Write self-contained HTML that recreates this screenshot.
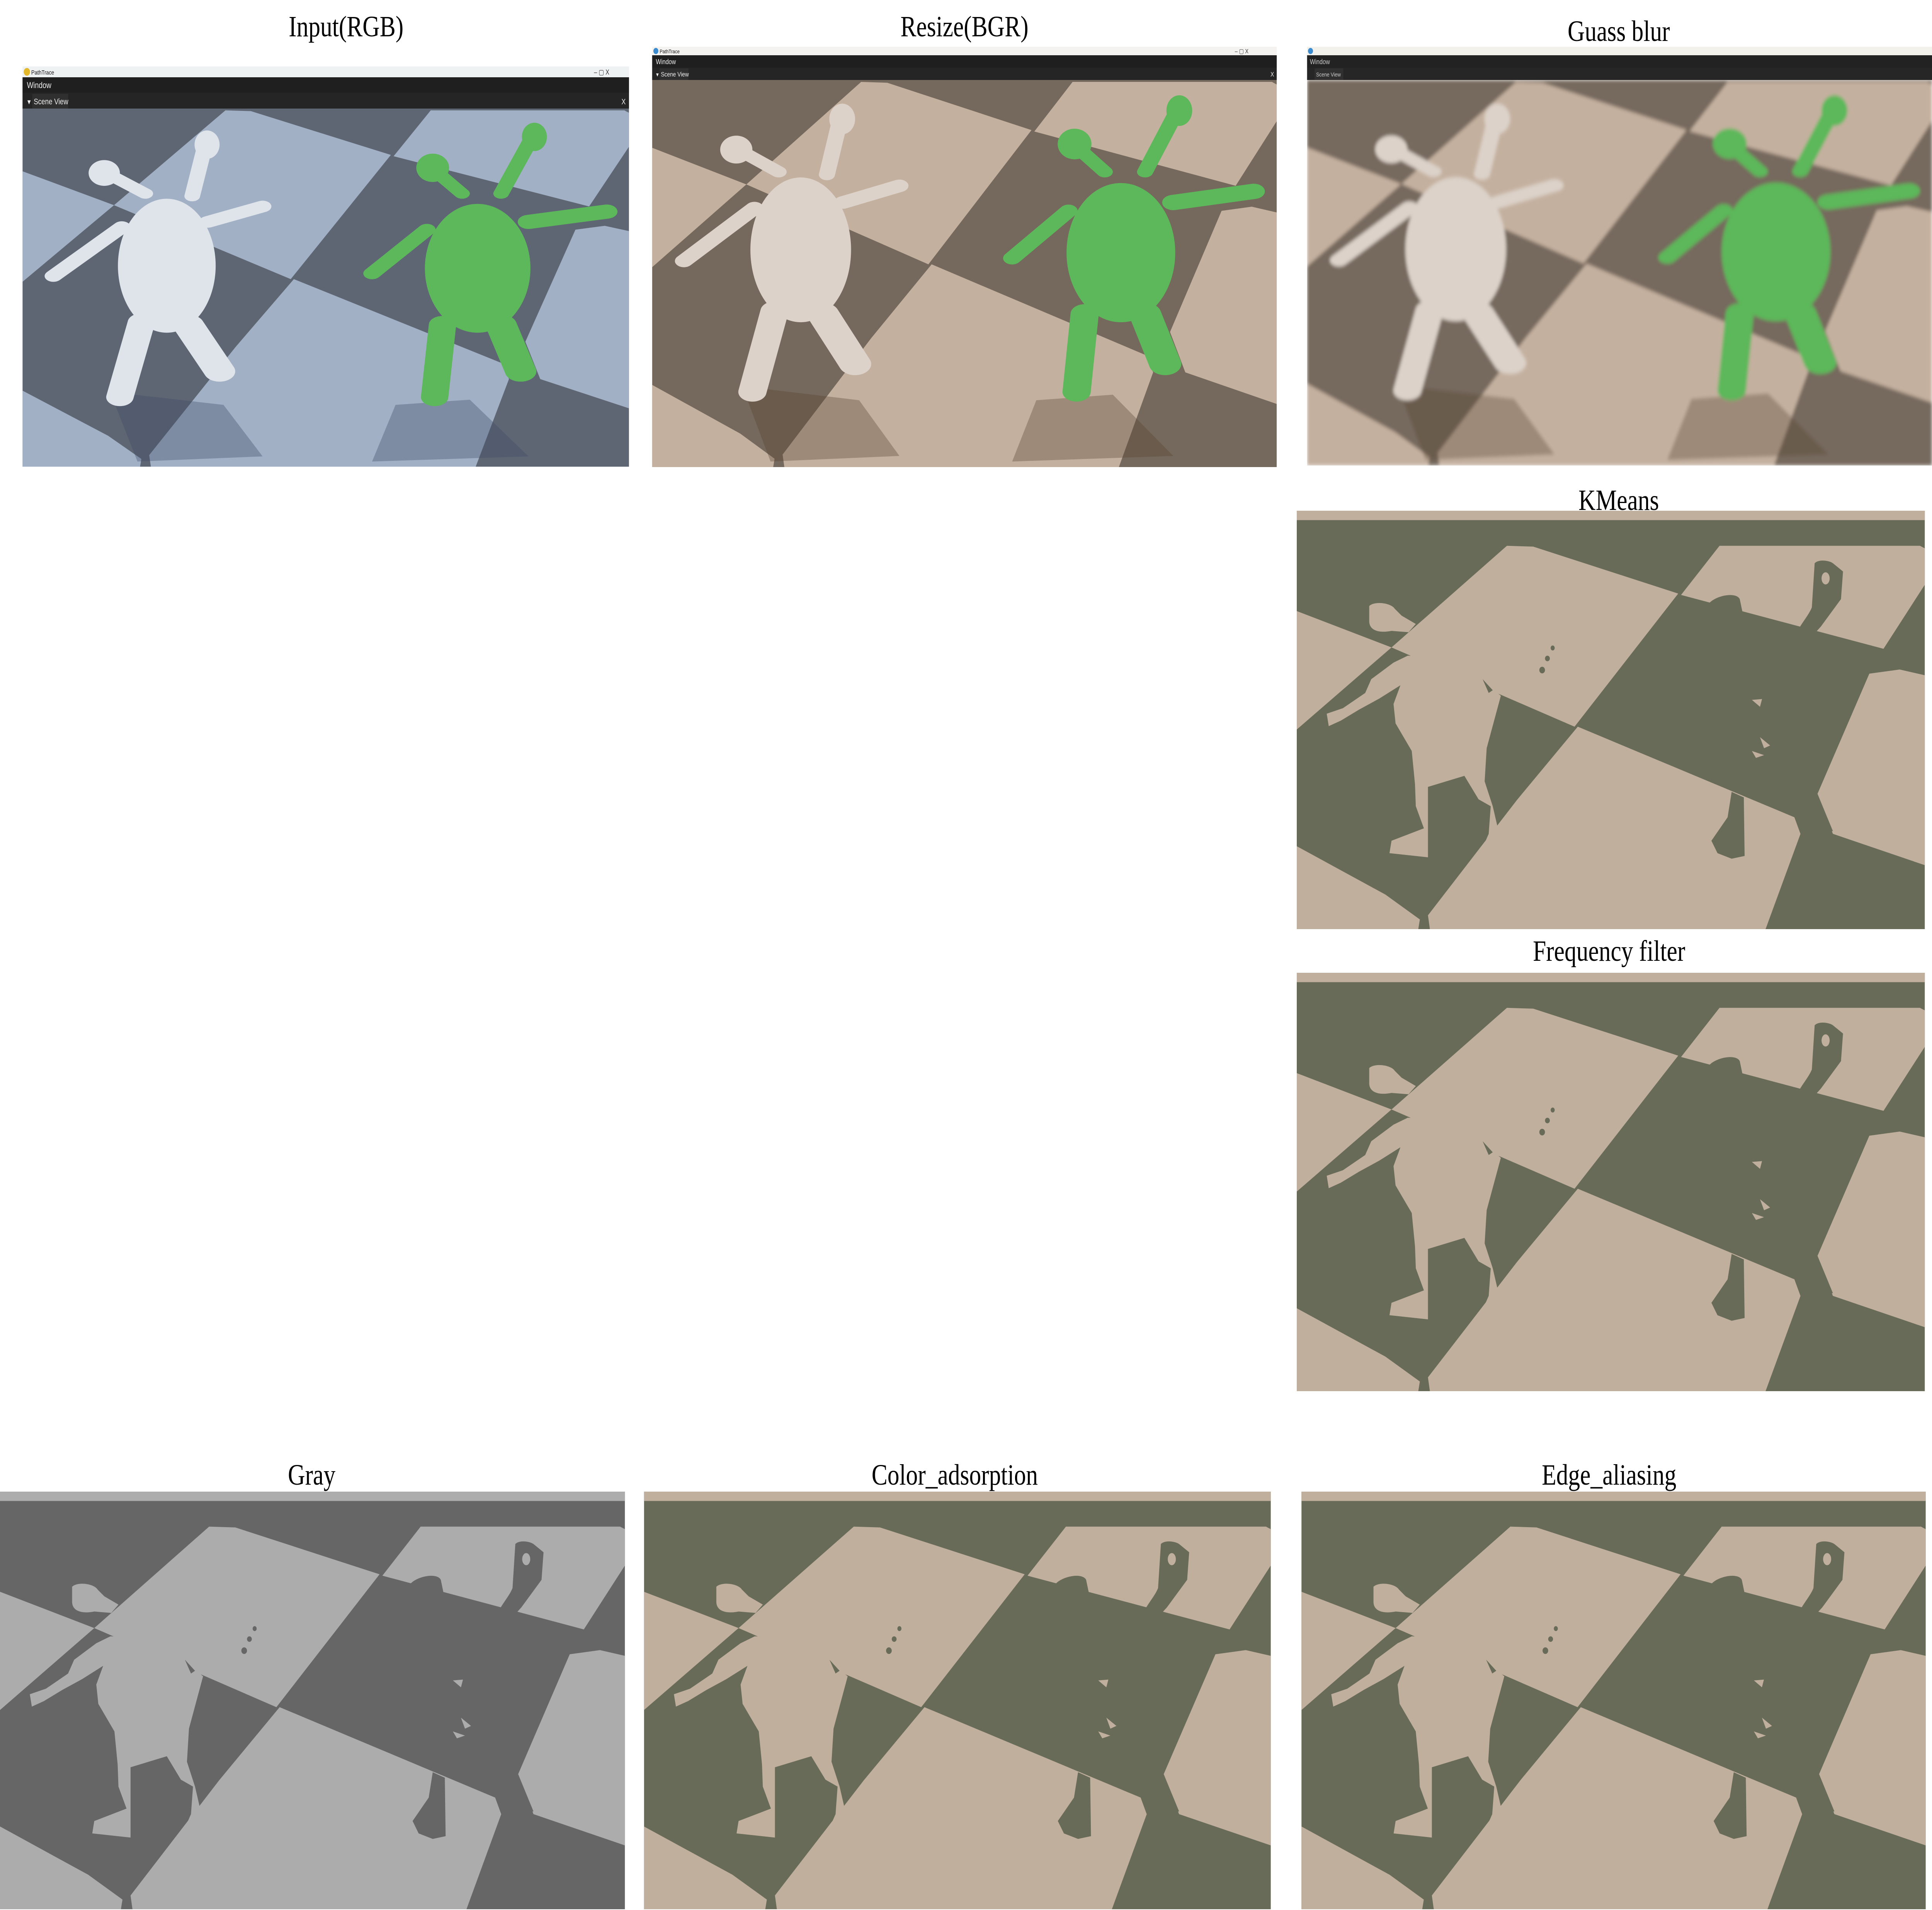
<!DOCTYPE html>
<html><head><meta charset="utf-8"><style>
html,body{margin:0;padding:0;background:#fff;overflow:hidden;width:100%;height:100%}
svg.root{display:block;width:100vw;height:100vh}
.lt{fill:var(--lt)}.dk{fill:var(--dk)}
</style></head><body>
<svg class="root" xmlns="http://www.w3.org/2000/svg" viewBox="0 0 6180 4944" preserveAspectRatio="none">
<defs>
<g id="tiles">
  <rect x="0" y="0" width="1600" height="1600" class="dk"/>
  <rect x="0" y="0" width="1600" height="64" class="lt"/>
  <path class="lt" d="M525,157 L590,160 L948,330 L692,812 L240,525 Z"/>
  <path class="lt" d="M0,390 L240,525 L0,830 Z"/>
  <path class="lt" d="M1050,157 L1545,157 L1600,200 L1455,530 L955,335 Z"/>
  <path class="lt" d="M700,812 L1235,1140 L1250,1200 L1150,1600 L340,1600 L330,1495 L550,1077 Z"/>
  <path class="lt" d="M1420,620 L1495,605 L1600,640 L1600,1335 L1330,1200 L1292,1055 Z"/>
  <path class="lt" d="M0,1240 L225,1420 L310,1510 L300,1600 L0,1600 Z"/>
</g>
<g id="segcreat">
  <path class="lt" d="M185,375 C200,355 240,365 248,385 L265,410 L300,440 L282,470 L240,465 C205,475 185,460 185,430 Z"/>
  <path class="lt" d="M280,555 L245,580 L190,640 L175,690 L120,745 L80,765 L85,810 L115,790 L160,750 L210,710 L262,662 L245,730 L250,800 L290,900 L298,1020 L300,1100 L320,1180 L240,1225 L235,1270 L330,1285 L330,1030 L420,990 L455,1075 L485,1100 L480,1200 L465,1250 L505,1195 L490,1100 L470,1010 L475,890 L510,700 L470,650 L450,560 Z"/>
  <path class="dk" d="M955,335 L1020,375 C1030,340 1090,320 1100,350 L1110,420 L1150,440 L1240,475 C1250,440 1270,410 1278,380 L1285,220 C1295,205 1320,210 1330,220 L1355,250 L1350,350 L1300,450 L1275,490 L1360,535 L1455,530 L1420,620 L1300,600 Z"/>
  <ellipse class="lt" cx="1312" cy="275" rx="10" ry="22"/>
  <path class="dk" d="M1080,1048 L1110,1068 L1112,1280 L1080,1290 L1045,1270 L1030,1225 L1070,1140 Z"/>
  <path class="dk" d="M1235,1140 L1292,1055 L1330,1190 L1250,1200 Z"/>
  <ellipse class="dk" cx="612" cy="607" rx="7" ry="12"/>
  <ellipse class="dk" cx="625" cy="565" rx="6" ry="10"/>
  <ellipse class="dk" cx="638" cy="527" rx="5" ry="9"/>
  <path class="dk" d="M465,640 L490,680 L480,690 Z"/>
  <path class="lt" d="M1130,715 L1155,712 L1150,740 Z M1150,850 L1175,880 L1160,890 Z M1130,900 L1160,915 L1140,925 Z"/>
</g>
<g id="photocreat" stroke-linecap="round" stroke-linejoin="round" fill="none">
  <path d="M230,1250 L520,1300 L620,1500 L300,1520 Z M960,1300 L1150,1280 L1300,1500 L900,1520 Z" style="fill:var(--sh);stroke:none"/>
  <g style="stroke:var(--c1);fill:var(--c1)">
    <path d="M320,480 L220,400" stroke-width="40"/>
    <ellipse cx="215" cy="400" rx="40" ry="50" stroke="none"/>
    <path d="M440,490 L475,280" stroke-width="40"/>
    <ellipse cx="478" cy="290" rx="32" ry="55" stroke="none"/>
    <path d="M260,610 L85,800" stroke-width="45"/>
    <path d="M480,590 L620,530" stroke-width="45"/>
    <ellipse cx="375" cy="760" rx="125" ry="260" stroke="none"/>
    <path d="M310,980 L255,1270" stroke-width="70"/>
    <path d="M430,990 L510,1170" stroke-width="80"/>
  </g>
  <g style="stroke:var(--c2);fill:var(--c2)">
    <path d="M1130,480 L1060,390" stroke-width="40"/>
    <ellipse cx="1055" cy="380" rx="42" ry="55" stroke="none"/>
    <path d="M1230,480 L1310,260" stroke-width="40"/>
    <ellipse cx="1315" cy="260" rx="32" ry="55" stroke="none"/>
    <path d="M1040,620 L900,790" stroke-width="45"/>
    <path d="M1300,590 L1500,550" stroke-width="55"/>
    <ellipse cx="1170" cy="770" rx="135" ry="250" stroke="none"/>
    <path d="M1080,990 L1060,1270" stroke-width="70"/>
    <path d="M1230,990 L1280,1170" stroke-width="80"/>
  </g>
</g>
<symbol id="seg" viewBox="6 30 1551 1515" preserveAspectRatio="none">
  <use href="#tiles"/><use href="#segcreat"/>
</symbol>
<symbol id="photo" viewBox="6 150 1551 1390" preserveAspectRatio="none">
  <use href="#tiles"/><use href="#photocreat"/>
</symbol>
<filter id="bl"><feGaussianBlur stdDeviation="5"/></filter>
</defs>

<g font-family="Liberation Serif, serif" font-size="76" text-anchor="middle" fill="#000">
  <text x="1107" y="94">Input(RGB)</text>
  <text x="3085" y="94">Resize(BGR)</text>
  <text x="5178" y="106">Guass blur</text>
  <text x="5178" y="1320">KMeans</text>
  <text x="5147" y="2487">Frequency filter</text>
  <text x="997" y="3843">Gray</text>
  <text x="3054" y="3843">Color_adsorption</text>
  <text x="5147" y="3843">Edge_aliasing</text>
</g>

<!-- Input -->
<g>
  <rect x="72" y="172" width="1940" height="28" fill="#eef2f3"/>
  <circle cx="86" cy="186" r="10" fill="#e3b82a"/>
  <text x="100" y="193" font-family="Liberation Sans, sans-serif" font-size="16" fill="#111">PathTrace</text>
  <text x="1900" y="193" font-family="Liberation Sans, sans-serif" font-size="18" fill="#333">–   ▢   X</text>
  <rect x="72" y="200" width="1940" height="40" fill="#1f1f1f"/>
  <text x="86" y="228" font-family="Liberation Sans, sans-serif" font-size="22" fill="#eee">Window</text>
  <rect x="72" y="240" width="1940" height="41" fill="#252525"/>
  <rect x="103" y="243" width="115" height="38" fill="#2f2f2f"/>
  <text x="84" y="270" font-family="Liberation Sans, sans-serif" font-size="18" fill="#eee">▼</text>
  <text x="108" y="270" font-family="Liberation Sans, sans-serif" font-size="21" fill="#eee">Scene View</text>
  <text x="1988" y="270" font-family="Liberation Sans, sans-serif" font-size="20" fill="#eee">X</text>
  <svg x="72" y="281" width="1940" height="927" style="--lt:#a2b0c5;--dk:#5e6674;--c1:#dfe3ea;--c2:#5cb85a;--sh:rgba(60,75,100,0.35)"><use href="#photo" width="1940" height="927"/></svg>
</g>

<!-- Resize -->
<g>
  <rect x="2086" y="121" width="1998" height="22" fill="#f5f3ef"/>
  <circle cx="2098" cy="132" r="8" fill="#3a8bd0"/>
  <text x="2110" y="138" font-family="Liberation Sans, sans-serif" font-size="14" fill="#111">PathTrace</text>
  <text x="3950" y="138" font-family="Liberation Sans, sans-serif" font-size="16" fill="#333">–   ▢   X</text>
  <rect x="2086" y="143" width="1998" height="32" fill="#1f1f1f"/>
  <text x="2098" y="166" font-family="Liberation Sans, sans-serif" font-size="18" fill="#eee">Window</text>
  <rect x="2086" y="175" width="1998" height="32" fill="#252525"/>
  <rect x="2110" y="177" width="92" height="30" fill="#2f2f2f"/>
  <text x="2096" y="198" font-family="Liberation Sans, sans-serif" font-size="14" fill="#eee">▼</text>
  <text x="2114" y="198" font-family="Liberation Sans, sans-serif" font-size="17" fill="#eee">Scene View</text>
  <text x="4064" y="198" font-family="Liberation Sans, sans-serif" font-size="17" fill="#eee">X</text>
  <svg x="2086" y="207" width="1998" height="1002" style="--lt:#c4b09f;--dk:#75685c;--c1:#dcd2c9;--c2:#5cb85a;--sh:rgba(90,70,50,0.35)"><use href="#photo" width="1998" height="1002"/></svg>
</g>

<!-- Guass -->
<g>
  <rect x="4181" y="121" width="1999" height="22" fill="#f3f1ec"/>
  <circle cx="4192" cy="132" r="8" fill="#3a8bd0"/>
  <rect x="4181" y="143" width="1999" height="32" fill="#222"/>
  <rect x="4181" y="175" width="1999" height="32" fill="#262626"/>
  <rect x="4205" y="177" width="92" height="30" fill="#303030"/>
  <text x="4190" y="166" font-family="Liberation Sans, sans-serif" font-size="18" fill="#ccc">Window</text>
  <text x="4210" y="198" font-family="Liberation Sans, sans-serif" font-size="15" fill="#ccc">Scene View</text>
  <svg x="4181" y="207" width="1999" height="998" style="--lt:#c4b09f;--dk:#76695d;--c1:#dcd2c9;--c2:#5cb85a;--sh:rgba(90,70,50,0.35)"><g filter="url(#bl)"><use href="#photo" width="1999" height="998"/></g></svg>
</g>

<!-- Segmented panels -->
<svg x="4148" y="1322" width="2009" height="1083" style="--lt:#c1af9e;--dk:#686b58"><use href="#seg" width="2009" height="1083"/></svg>
<svg x="4148" y="2518" width="2009" height="1083" style="--lt:#c1af9e;--dk:#686b58"><use href="#seg" width="2009" height="1083"/></svg>
<svg x="0" y="3861" width="1999" height="1081" style="--lt:#acacac;--dk:#666666"><use href="#seg" width="1999" height="1081"/></svg>
<svg x="2060" y="3861" width="2005" height="1081" style="--lt:#c1af9e;--dk:#686b58"><use href="#seg" width="2005" height="1081"/></svg>
<svg x="4163" y="3861" width="1997" height="1081" style="--lt:#c1af9e;--dk:#686b58"><use href="#seg" width="1997" height="1081"/></svg>
</svg>
</body></html>
